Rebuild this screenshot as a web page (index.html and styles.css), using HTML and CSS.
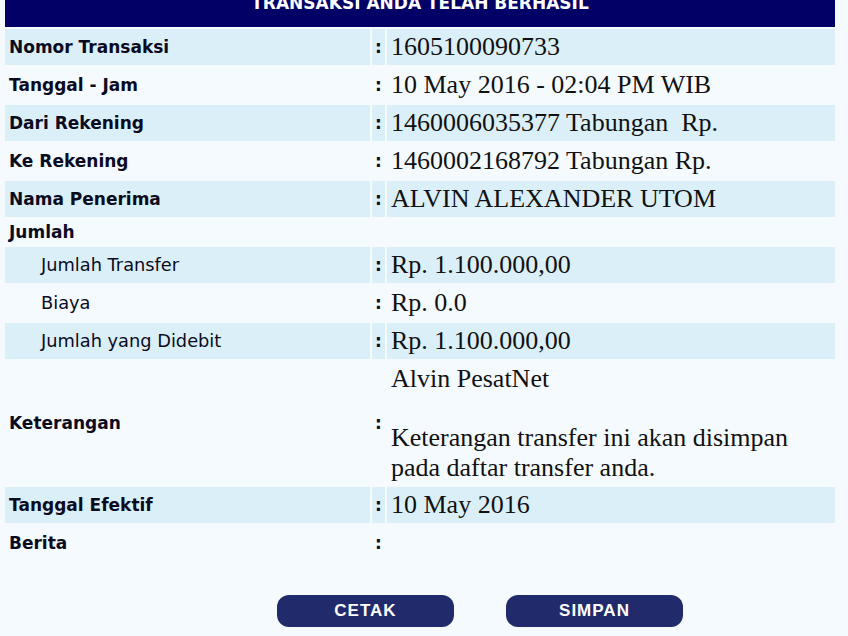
FILE: index.html
```html
<!DOCTYPE html>
<html>
<head>
<meta charset="utf-8">
<link rel="stylesheet" href="styles.css">
</head>
<body>
<div class="page">
  <div class="header"><div class="title">TRANSAKSI ANDA TELAH BERHASIL</div></div>
  <div class="row blue"><div class="label">Nomor Transaksi</div><div class="colon">:</div><div class="value">1605100090733</div></div>
  <div class="row"><div class="label">Tanggal - Jam</div><div class="colon">:</div><div class="value">10 May 2016 - 02:04 PM WIB</div></div>
  <div class="row blue"><div class="label">Dari Rekening</div><div class="colon">:</div><div class="value">1460006035377 Tabungan&nbsp; Rp.</div></div>
  <div class="row"><div class="label">Ke Rekening</div><div class="colon">:</div><div class="value">1460002168792 Tabungan Rp.</div></div>
  <div class="row blue"><div class="label">Nama Penerima</div><div class="colon">:</div><div class="value">ALVIN ALEXANDER UTOM</div></div>
  <div class="row short"><div class="label">Jumlah</div><div class="colon"></div><div class="value"></div></div>
  <div class="row blue"><div class="label sub">Jumlah Transfer</div><div class="colon">:</div><div class="value">Rp. 1.100.000,00</div></div>
  <div class="row"><div class="label sub">Biaya</div><div class="colon">:</div><div class="value">Rp. 0.0</div></div>
  <div class="row blue"><div class="label sub">Jumlah yang Didebit</div><div class="colon">:</div><div class="value">Rp. 1.100.000,00</div></div>
  <div class="row"><div class="label">Keterangan</div><div class="colon">:</div><div class="value multi">Alvin PesatNet<br><br>Keterangan transfer ini akan disimpan pada daftar transfer anda.</div></div>
  <div class="row blue"><div class="label">Tanggal Efektif</div><div class="colon">:</div><div class="value">10 May 2016</div></div>
  <div class="row"><div class="label">Berita</div><div class="colon">:</div><div class="value"></div></div>
  <div class="buttons">
    <div class="btn">CETAK</div>
    <div class="btn">SIMPAN</div>
  </div>
</div>
</body>
</html>
```
FILE: styles.css
```css
html, body {
  margin: 0;
  padding: 0;
  background: #f5fafe;
}
.page {
  width: 830px;
  padding-left: 5px;
  display: flex;
  flex-direction: column;
  gap: 2px;
}
.header {
  height: 27px;
  overflow: hidden;
  background: #020066;
  color: #ffffff;
  text-align: center;
  font: bold 17px/20px "DejaVu Sans", sans-serif;
}
.title {
  margin-top: -7px;
}
.row {
  display: grid;
  grid-template-columns: 365px 13px 448px;
  column-gap: 2px;
  min-height: 36px;
}
.row.short {
  min-height: 26px;
}
.row.blue > div {
  background: #dbeff9;
}
.label, .colon, .value {
  display: flex;
  flex-direction: column;
  justify-content: center;
}
.label {
  padding: 0 4px;
  font: bold 17px/20px "DejaVu Sans", sans-serif;
  color: #0b0b1e;
}
.label.sub {
  padding-left: 36px;
  font-weight: normal;
  font-size: 17.8px;
}
.colon {
  padding-left: 3px;
  font: bold 17px/20px "DejaVu Sans", sans-serif;
  color: #0b0b1e;
}
.value {
  padding: 0 4px;
  font: 26px/29.5px "Liberation Serif", serif;
  color: #111111;
}
.value.multi {
  display: block;
  padding: 3px 4px;
}
.buttons {
  display: flex;
  gap: 52px;
  padding-left: 272px;
  margin-top: 32px;
}
.btn {
  width: 177px;
  height: 32px;
  border-radius: 12px;
  background: #212a6a;
  color: #ffffff;
  font: bold 17px/32px "Liberation Sans", sans-serif;
  letter-spacing: 1px;
  text-align: center;
}
```
